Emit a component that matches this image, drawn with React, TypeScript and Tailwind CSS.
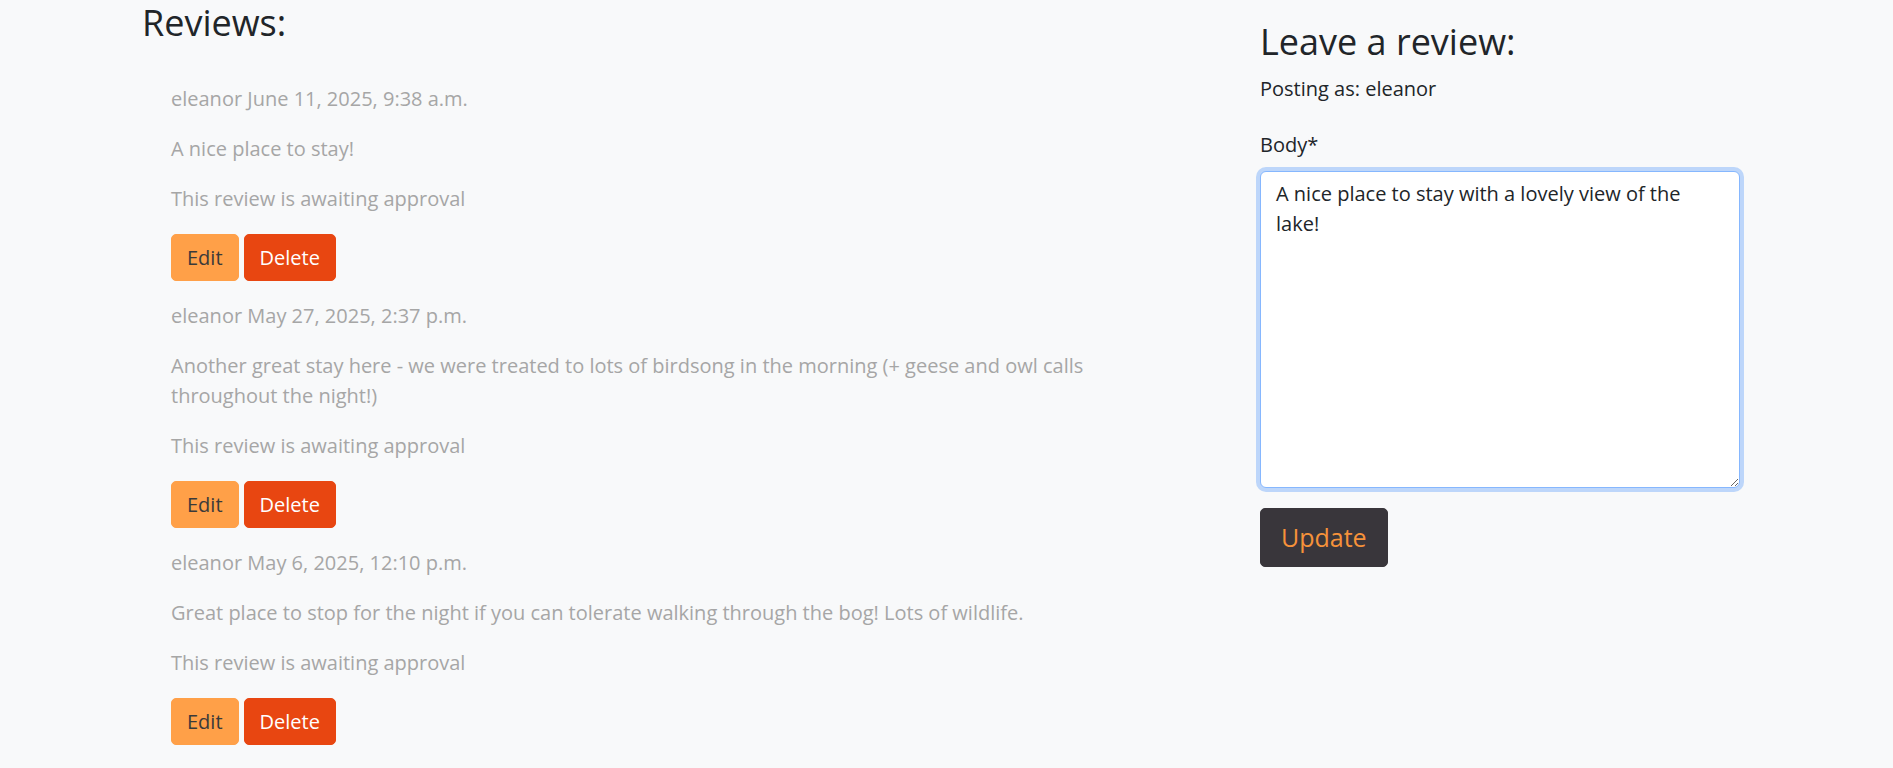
import React from "react";

type Review = {
  author: string;
  date: string;
  body: string;
};

const reviews: Review[] = [
  {
    author: "eleanor",
    date: "June 11, 2025, 9:38 a.m.",
    body: "A nice place to stay!",
  },
  {
    author: "eleanor",
    date: "May 27, 2025, 2:37 p.m.",
    body: "Another great stay here - we were treated to lots of birdsong in the morning (+ geese and owl calls throughout the night!)",
  },
  {
    author: "eleanor",
    date: "May 6, 2025, 12:10 p.m.",
    body: "Great place to stop for the night if you can tolerate walking through the bog! Lots of wildlife.",
  },
];

const ReviewItem = ({ review }: { review: Review }) => {
  return (
    <div className="mb-[20px] text-[#a6a6a6]">
      <p className="mb-[20px]">
        {review.author} {review.date}
      </p>
      <p className="mb-[20px]">{review.body}</p>
      <p className="mb-[20px]">This review is awaiting approval</p>
      <div className="flex gap-[5px]">
        <button className="rounded-[5px] border border-[#ffa048] bg-[#ffa048] px-[15px] py-[7.5px] leading-[30px] text-[#3a3a3a]">
          Edit
        </button>
        <button className="rounded-[5px] border border-[#e84611] bg-[#e84611] px-[15px] py-[7.5px] leading-[30px] text-white">
          Delete
        </button>
      </div>
    </div>
  );
};

const App = () => {
  return (
    <div className="min-h-[768px] bg-[#f8f9fa] font-['Open_Sans',sans-serif] text-[20px] leading-[30px] text-[#212529]">
      <div className="flex pl-[142px]">
        {/* reviews list */}
        <div className="w-[1118px] pt-[1px]">
          <h2 className="mb-[40px] text-[36px] font-medium leading-[43.2px]">
            Reviews:
          </h2>
          <div className="w-[980px] pl-[29px]">
            {reviews.map((r, i) => (
              <ReviewItem key={i} review={r} />
            ))}
          </div>
        </div>

        {/* form */}
        <div className="w-[480px] pt-[20px]">
          <h2 className="mb-[11px] text-[36px] font-medium leading-[43.2px]">
            Leave a review:
          </h2>
          <p className="mb-[26px]">Posting as: eleanor</p>
          <label className="mb-[10.5px] block">Body*</label>
          <textarea
            className="block h-[317px] w-[480px] rounded-[6px] border border-[#86b7fe] bg-white px-[15px] py-[7.5px] text-[20px] leading-[30px] text-[#212529] shadow-[0_0_0_4px_rgba(13,110,253,0.25)] outline-none"
            defaultValue="A nice place to stay with a lovely view of the lake!"
          />
          <button className="mt-[20px] rounded-[5px] border border-[#39363b] bg-[#39363b] px-[20px] py-[10px] text-[25px] leading-[37.5px] text-[#f6923a]">
            Update
          </button>
        </div>
      </div>
    </div>
  );
};

export default App;
